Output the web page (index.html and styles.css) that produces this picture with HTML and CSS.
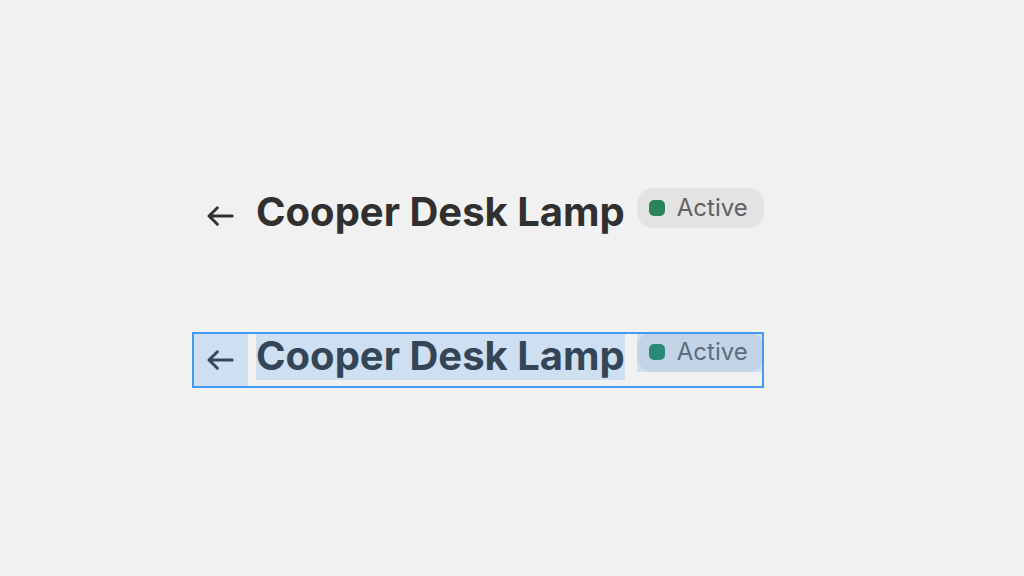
FILE: index.html
```html
<!DOCTYPE html>
<html lang="en">
<head>
<meta charset="utf-8">
<title>Cooper Desk Lamp</title>
<link rel="stylesheet" href="styles.css">
</head>
<body>
<main class="stage">
  <header class="title-bar">
    <button class="back" type="button" aria-label="Back">
      <svg class="arrow" viewBox="0 0 40 40" aria-hidden="true"><path d="M32.2 20H9M17.4 11.8L9 20L17.4 28.2"/></svg>
    </button>
    <h1 class="title">Cooper Desk Lamp</h1>
    <span class="badge"><span class="dot"></span>Active</span>
  </header>
  <header class="title-bar inspected">
    <button class="back" type="button" aria-label="Back">
      <svg class="arrow" viewBox="0 0 40 40" aria-hidden="true"><path d="M32.2 20H9M17.4 11.8L9 20L17.4 28.2"/></svg>
    </button>
    <h2 class="title">Cooper Desk Lamp</h2>
    <span class="badge"><span class="dot"></span>Active</span>
  </header>
</main>
</body>
</html>
```
FILE: styles.css
```css
* { box-sizing: border-box; }
body {
  margin: 0;
  background: #f1f1f1;
  color: #303030;
  font-family: Inter, "Liberation Sans", sans-serif;
}
.stage {
  min-height: 100vh;
  padding: 0 192px;
  display: flex;
  flex-direction: column;
  align-items: flex-start;
  justify-content: center;
  gap: 88px;
}
.title-bar {
  position: relative;
  display: flex;
  align-items: flex-start;
}
.back {
  position: relative;
  display: flex;
  align-items: center;
  justify-content: center;
  width: 56px;
  height: 56px;
  margin-right: 8px;
  padding: 0;
  border: 0;
  background: none;
  color: inherit;
}
.arrow {
  width: 40px;
  height: 40px;
  fill: none;
  stroke: #303030;
  stroke-width: 3;
  stroke-linecap: round;
  stroke-linejoin: round;
}
.title {
  position: relative;
  margin: 0 12px 0 0;
  font-size: 40px;
  line-height: 48px;
  font-weight: 650;
  white-space: nowrap;
}
.badge {
  position: relative;
  display: flex;
  align-items: center;
  gap: 12px;
  height: 40px;
  padding: 0 16px 0 12px;
  border-radius: 16px;
  background: #e3e3e3;
  color: #616161;
  font-size: 24px;
  line-height: 40px;
}
.dot {
  width: 16px;
  height: 16px;
  border-radius: 5px;
  background: #29845a;
}
.inspected::after {
  content: "";
  position: absolute;
  inset: 0;
  border: 2px solid #4499f7;
}
.inspected .back::after,
.inspected .title::after,
.inspected .badge::after {
  content: "";
  position: absolute;
  inset: 0;
  background: rgb(68 153 247 / 20%);
}
```
